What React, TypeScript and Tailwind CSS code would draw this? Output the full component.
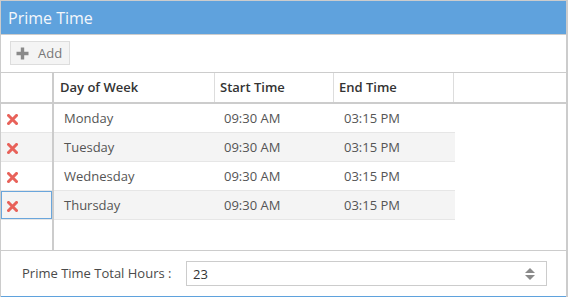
import React from "react";

const rows = [
  { day: "Monday", start: "09:30 AM", end: "03:15 PM" },
  { day: "Tuesday", start: "09:30 AM", end: "03:15 PM" },
  { day: "Wednesday", start: "09:30 AM", end: "03:15 PM" },
  { day: "Thursday", start: "09:30 AM", end: "03:15 PM" },
];

function XIcon() {
  return (
    <svg width="11" height="11" viewBox="0 0 11 11">
      <path d="M1.5 1.5 L9.5 9.5 M9.5 1.5 L1.5 9.5" stroke="#e8625a" strokeWidth="3" strokeLinecap="square" />
    </svg>
  );
}

function PlusIcon() {
  return (
    <svg width="13" height="13" viewBox="0 0 13 13">
      <path d="M6.5 0.5 V12.5 M0.5 6.5 H12.5" stroke="#8a8a8a" strokeWidth="3.4" />
    </svg>
  );
}

function SortIcon() {
  return (
    <svg width="10" height="12" viewBox="0 0 10 12">
      <path d="M5 0 L10 5 H0 Z" fill="#8a8a8a" />
      <path d="M5 12 L10 7 H0 Z" fill="#8a8a8a" />
    </svg>
  );
}

export default function App() {
  return (
    <div
      className="w-[568px] h-[297px] bg-white flex flex-col border-t border-l border-r-2 border-[#cccccc] text-[13px]"
      style={{ fontFamily: '"Open Sans", "Liberation Sans", sans-serif' }}
    >
      <div className="h-[34px] shrink-0 bg-[#5fa2dd] border-b border-[#cccccc] flex items-center pl-[7px]">
        <span className="text-[16px] text-[#f4f7fb] leading-none">Prime Time</span>
      </div>
      <div className="h-[37px] shrink-0 flex items-start pt-[6px] pl-[9px]">
        <div className="h-[24px] w-[60px] flex items-center bg-[#f4f4f4] border border-[#dddddd] pl-[5px] gap-[9px]">
          <PlusIcon />
          <span className="text-[#777777] leading-none">Add</span>
        </div>
      </div>
      <div className="flex-1 flex border-t border-[#cccccc] min-h-0">
        <div className="w-[53px] shrink-0 border-r-2 border-[#cccccc] flex flex-col">
          <div className="h-[29px] border-b-2 border-[#cccccc] box-content"></div>
          {rows.map((r, i) => (
            <div
              key={i}
              className={
                "h-[29px] border-b border-[#e6e6e6] flex items-center pl-[6px] pt-[2px] " +
                (i % 2 === 1 ? "bg-[#f4f4f4] " : "bg-white ") +
                (i === 3 ? "shadow-[inset_0_0_0_1px_#6aa6dc]" : "")
              }
            >
              <XIcon />
            </div>
          ))}
        </div>
        <div className="flex-1 flex flex-col">
          <div className="h-[29px] box-content border-b-2 border-[#cccccc] flex font-semibold text-[#333333]">
            <div className="w-[161px] border-r border-[#dddddd] flex items-center pl-[6px]">Day of Week</div>
            <div className="w-[119px] border-r border-[#dddddd] flex items-center pl-[5px]">Start Time</div>
            <div className="w-[120px] border-r border-[#dddddd] flex items-center pl-[5px]">End Time</div>
            <div className="flex-1"></div>
          </div>
          {rows.map((r, i) => (
            <div
              key={i}
              className={
                "w-[401px] h-[29px] border-b border-[#e6e6e6] flex items-center pt-[2px] text-[#555555] " +
                (i % 2 === 1 ? "bg-[#f4f4f4]" : "bg-white")
              }
            >
              <div className="w-[160px] pl-[10px]">{r.day}</div>
              <div className="w-[120px] pl-[10px]">{r.start}</div>
              <div className="w-[120px] pl-[10px]">{r.end}</div>
            </div>
          ))}
        </div>
      </div>
      <div className="h-[47px] shrink-0 border-t border-b border-t-[#cccccc] border-b-[#5fa2dd] flex items-center pl-[21px] pr-[19px]">
        <span className="w-[164px] text-[#4a4a4a] pt-[1px]">Prime Time Total Hours :</span>
        <div className="flex-1 h-[25px] border border-[#cccccc] flex items-center pl-[6px] pr-[11px] text-[#333333]">
          <span className="flex-1 pt-[2px]">23</span>
          <SortIcon />
        </div>
      </div>
    </div>
  );
}
